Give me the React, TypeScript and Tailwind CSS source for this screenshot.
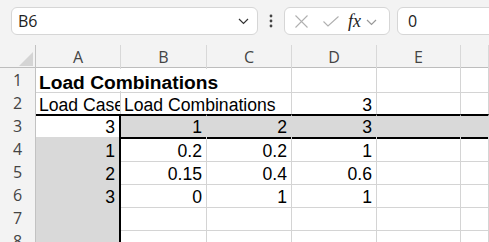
import React from 'react'

const cols = 'grid grid-cols-[36px_85px_86px_85px_85px_84px_1fr]'
const cellBase = 'flex items-end leading-none overflow-hidden whitespace-nowrap border-r border-b'
const white = 'border-[#d4d4d4]'
const gray = 'bg-[#d9d9d9] border-[#d9d9d9]'

function RowHead({ n }: { n: number }) {
  return (
    <div className="flex items-center justify-center border-r border-b border-r-[#c2c2c2] border-b-[#dcdcdc] bg-[#f3f3f3] text-[16px] text-[#444] font-['Open_Sans',sans-serif]">
      {n}
    </div>
  )
}

function Num({ v, cls }: { v?: string; cls: string }) {
  return <div className={`${cellBase} justify-end pr-[4px] ${cls}`}>{v}</div>
}

function Chevron({ color = '#333' }: { color?: string }) {
  return (
    <svg width="11" height="7" viewBox="0 0 11 7" fill="none">
      <path d="M1 1 L5.5 5.5 L10 1" stroke={color} strokeWidth="1.2" />
    </svg>
  )
}

export default function App() {
  const dataRows = [
    { n: 4, a: '1', b: '0.2', c: '0.2', d: '1' },
    { n: 5, a: '2', b: '0.15', c: '0.4', d: '0.6' },
    { n: 6, a: '3', b: '0', c: '1', d: '1' },
    { n: 7 },
    { n: 8 },
  ] as { n: number; a?: string; b?: string; c?: string; d?: string }[]

  return (
    <div className="w-[489px] h-[242px] overflow-hidden bg-white font-['Liberation_Sans',Arial,sans-serif] text-black">
      {/* formula bar */}
      <div className="h-[45px] bg-[#f3f3f3] flex items-start pt-[7px] pl-[11px] overflow-hidden">
        <div className="shrink-0 w-[247px] h-[28px] bg-white border border-[#d6d6d6] rounded-[6px] flex items-center pl-[6px] pr-[8px]">
          <span className="flex-1 text-[16px] text-[#222] font-['Open_Sans',sans-serif]">B6</span>
          <Chevron />
        </div>
        <div className="shrink-0 w-[26px] h-[28px] flex items-center justify-center">
          <svg width="4" height="14" viewBox="0 0 4 14">
            <circle cx="2" cy="2" r="1.4" fill="#444" />
            <circle cx="2" cy="7" r="1.4" fill="#444" />
            <circle cx="2" cy="12" r="1.4" fill="#444" />
          </svg>
        </div>
        <div className="shrink-0 w-[106px] h-[28px] bg-white border border-[#d6d6d6] rounded-[6px] flex items-center pl-[10px]">
          <svg width="13" height="13" viewBox="0 0 13 13">
            <path d="M0.5 0.5 L12.5 12.5 M12.5 0.5 L0.5 12.5" stroke="#b0b0b0" strokeWidth="1.1" />
          </svg>
          <svg className="ml-[15px]" width="16" height="11" viewBox="0 0 16 11" fill="none">
            <path d="M0.5 5.5 L5 10 L15.5 0.5" stroke="#b0b0b0" strokeWidth="1.1" />
          </svg>
          <span className="ml-[9px] text-[18px] italic text-[#222] font-['Liberation_Serif',serif] leading-none">fx</span>
          <span className="ml-[5px] mt-[2px]">
            <Chevron color="#999" />
          </span>
        </div>
        <div className="shrink-0 ml-[7px] w-[120px] h-[28px] bg-white border border-[#d6d6d6] rounded-[6px] flex items-center pl-[10px] text-[16px] text-[#222] font-['Open_Sans',sans-serif]">
          0
        </div>
      </div>

      {/* column headers */}
      <div className={`${cols} h-[23px] bg-[#f3f3f3] border-b border-[#bdbdbd] text-[16px] text-[#444] font-['Open_Sans',sans-serif]`}>
        <div className="relative border-r border-[#c2c2c2]">
          <svg className="absolute right-[2px] bottom-[3px]" width="14" height="14" viewBox="0 0 14 14">
            <path d="M14 0 L14 14 L0 14 Z" fill="#d4d4d4" />
          </svg>
        </div>
        {['A', 'B', 'C', 'D', 'E', ''].map((c, i) => (
          <div key={i} className="flex items-center justify-center border-r border-[#d8d8d8]">
            {c}
          </div>
        ))}
      </div>

      {/* row 1 */}
      <div className={`${cols} h-[23px]`}>
        <RowHead n={1} />
        <div className={`${cellBase} ${white} col-span-3 pl-[3px] text-[19.2px] font-bold`}>Load Combinations</div>
        <div className={`${cellBase} ${white}`} />
        <div className={`${cellBase} ${white}`} />
        <div className={`${cellBase} ${white}`} />
      </div>

      {/* row 2 */}
      <div className={`${cols} h-[23px]`}>
        <RowHead n={2} />
        <div className={`${cellBase} ${white} pl-[3px] text-[17.6px]`}>Load Case</div>
        <div className={`${cellBase} ${white} col-span-2 pl-[3px] text-[17.6px]`}>Load Combinations</div>
        <Num v="3" cls={`${white} text-[17.6px]`} />
        <div className={`${cellBase} ${white}`} />
        <div className={`${cellBase} ${white}`} />
      </div>

      {/* row 3 */}
      <div className={`${cols} h-[23px] text-[17.6px]`}>
        <RowHead n={3} />
        <Num v="3" cls="border-t-2 border-b-2 border-r-2 border-black" />
        <Num v="1" cls={`${gray} border-t-2 border-b-2 border-t-black border-b-black`} />
        <Num v="2" cls={`${gray} border-t-2 border-b-2 border-t-black border-b-black`} />
        <Num v="3" cls={`${gray} border-t-2 border-b-2 border-t-black border-b-black`} />
        <Num cls={`${gray} border-t-2 border-b-2 border-t-black border-b-black`} />
        <Num cls={`${gray} border-t-2 border-b-2 border-t-black border-b-black`} />
      </div>

      {dataRows.map(r => (
        <div key={r.n} className={`${cols} h-[23px] text-[17.6px]`}>
          <RowHead n={r.n} />
          <Num v={r.a} cls={`${gray} border-r-2 border-r-black`} />
          <Num v={r.b} cls={white} />
          <Num v={r.c} cls={white} />
          <Num v={r.d} cls={white} />
          <Num cls={white} />
          <Num cls={white} />
        </div>
      ))}
    </div>
  )
}
